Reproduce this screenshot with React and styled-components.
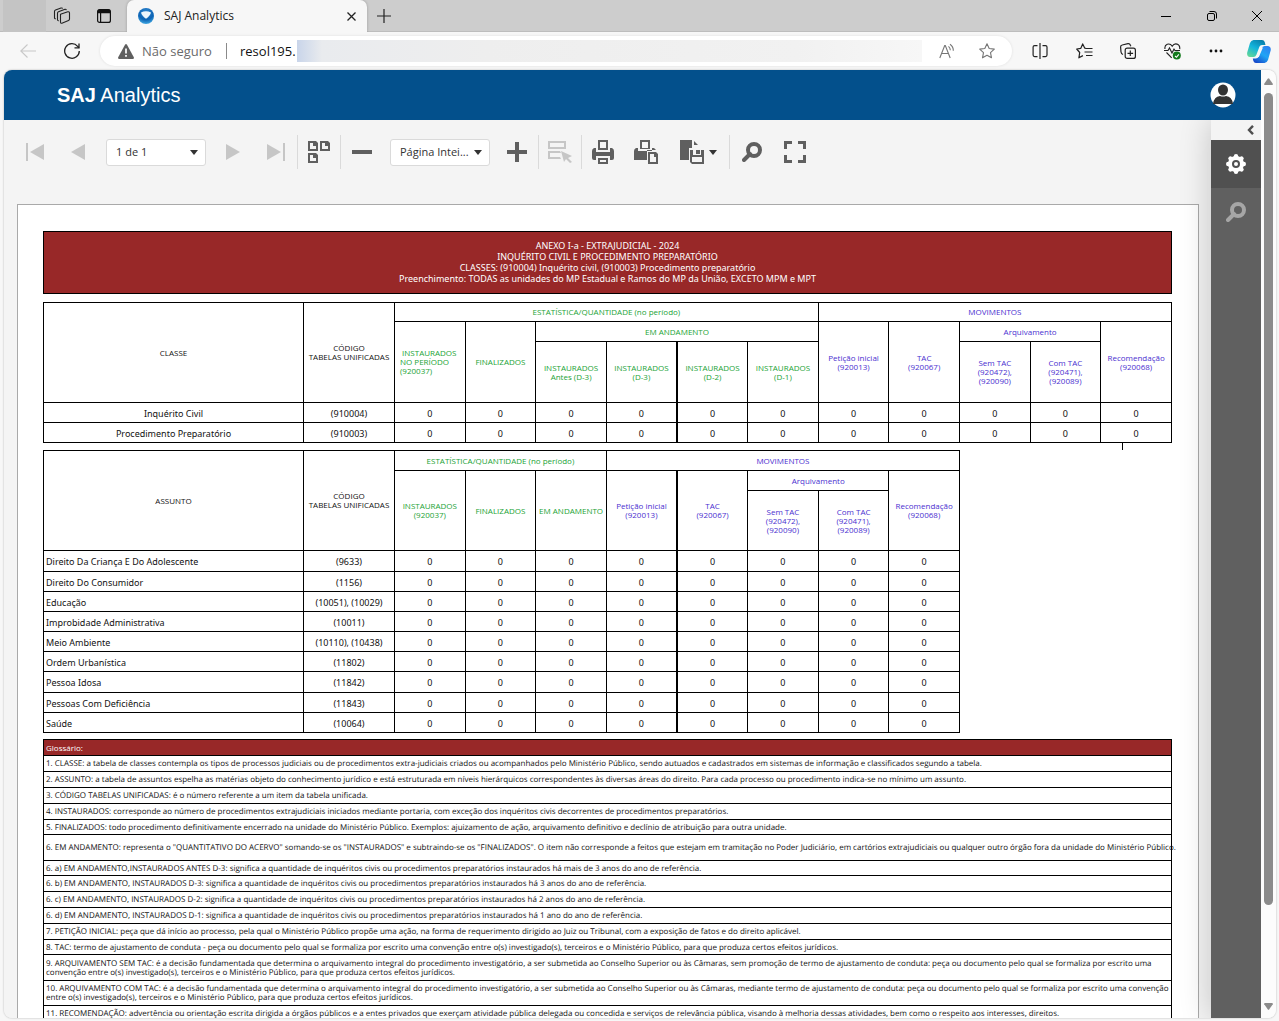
import React, { useState } from "react";
import styled, { createGlobalStyle } from "styled-components";

const estatistica = "ESTATÍSTICA/QUANTIDADE (no período)";

const classes = [
  { nome: "Inquérito Civil", codigo: "(910004)" },
  { nome: "Procedimento Preparatório", codigo: "(910003)" },
];

const assuntos = [
  { nome: "Direito Da Criança E Do Adolescente", codigo: "(9633)" },
  { nome: "Direito Do Consumidor", codigo: "(1156)" },
  { nome: "Educação", codigo: "(10051), (10029)" },
  { nome: "Improbidade Administrativa", codigo: "(10011)" },
  { nome: "Meio Ambiente", codigo: "(10110), (10438)" },
  { nome: "Ordem Urbanística", codigo: "(11802)" },
  { nome: "Pessoa Idosa", codigo: "(11842)" },
  { nome: "Pessoas Com Deficiência", codigo: "(11843)" },
  { nome: "Saúde", codigo: "(10064)" },
];

const glossario = [
  { h: 16, texto: "1. CLASSE: a tabela de classes contempla os tipos de processos judiciais ou de procedimentos extra-judiciais criados ou acompanhados pelo Ministério Público, sendo autuados e cadastrados em sistemas de informação e classificados segundo a tabela." },
  { h: 16, texto: "2. ASSUNTO: a tabela de assuntos espelha as matérias objeto do conhecimento jurídico e está estruturada em níveis hierárquicos correspondentes às diversas áreas do direito. Para cada processo ou procedimento indica-se no mínimo um assunto." },
  { h: 16, texto: "3. CÓDIGO TABELAS UNIFICADAS: é o número referente a um item da tabela unificada." },
  { h: 16, texto: "4. INSTAURADOS: corresponde ao número de procedimentos extrajudiciais iniciados mediante portaria, com exceção dos inquéritos civis decorrentes de procedimentos preparatórios." },
  { h: 15, texto: "5. FINALIZADOS: todo procedimento definitivamente encerrado na unidade do Ministério Público. Exemplos: ajuizamento de ação, arquivamento definitivo e declínio de atribuição para outra unidade." },
  { h: 26, texto: '6. EM ANDAMENTO: representa o "QUANTITATIVO DO ACERVO" somando-se os "INSTAURADOS" e subtraindo-se os "FINALIZADOS". O item não corresponde a feitos que estejam em tramitação no Poder Judiciário, em cartórios extrajudiciais ou qualquer outro órgão fora da unidade do Ministério Público.' },
  { h: 15, texto: "6. a) EM ANDAMENTO,INSTAURADOS ANTES D-3: significa a quantidade de inquéritos civis ou procedimentos preparatórios instaurados há mais de 3 anos do ano de referência." },
  { h: 16, texto: "6. b) EM ANDAMENTO, INSTAURADOS D-3: significa a quantidade de inquéritos civis ou procedimentos preparatórios instaurados há 3 anos do ano de referência." },
  { h: 16, texto: "6. c) EM ANDAMENTO, INSTAURADOS D-2: significa a quantidade de inquéritos civis ou procedimentos preparatórios instaurados há 2 anos do ano de referência." },
  { h: 16, texto: "6. d) EM ANDAMENTO, INSTAURADOS D-1: significa a quantidade de inquéritos civis ou procedimentos preparatórios instaurados há 1 ano do ano de referência." },
  { h: 16, texto: "7. PETIÇÃO INICIAL: peça que dá início ao processo, pela qual o Ministério Público propõe uma ação, na forma de requerimento dirigido ao Juiz ou Tribunal, com a exposição de fatos e do direito aplicável." },
  { h: 15, texto: "8. TAC: termo de ajustamento de conduta - peça ou documento pelo qual se formaliza por escrito uma convenção entre o(s) investigado(s), terceiros e o Ministério Público, para que produza certos efeitos jurídicos." },
  { h: 26, texto: "9. ARQUIVAMENTO SEM TAC: é a decisão fundamentada que determina o arquivamento integral do procedimento investigatório, a ser submetida ao Conselho Superior ou às Câmaras, sem promoção de termo de ajustamento de conduta: peça ou documento pelo qual se formaliza por escrito uma\nconvenção entre o(s) investigado(s), terceiros e o Ministério Público, para que produza certos efeitos jurídicos." },
  { h: 25, texto: "10. ARQUIVAMENTO COM TAC: é a decisão fundamentada que determina o arquivamento integral do procedimento investigatório, a ser submetida ao Conselho Superior ou às Câmaras, mediante termo de ajustamento de conduta: peça ou documento pelo qual se formaliza por escrito uma convenção\nentre o(s) investigado(s), terceiros e o Ministério Público, para que produza certos efeitos jurídicos." },
  { h: 16, texto: "11. RECOMENDAÇÃO: advertência ou orientação escrita dirigida a órgãos públicos e a entes privados que exerçam atividade pública delegada ou concedida e serviços de relevância pública, visando à melhoria dessas atividades, bem como o respeito aos interesses, direitos." },
];

function Caret() {
  return (
    <svg width="8" height="5" viewBox="0 0 8 5">
      <path d="M0 0h8L4 5z" fill="#333" />
    </svg>
  );
}

function SearchIcon({ color }) {
  return (
    <svg width="20" height="20" viewBox="0 0 20 20" fill="none" stroke={color}>
      <circle cx="12" cy="8" r="6" strokeWidth="4" />
      <path d="M8 12l-6 6" strokeWidth="4" strokeLinecap="round" />
    </svg>
  );
}

function TabStrip() {
  return (
    <Tabs>
      <ProfileSlot />
      <StripButton aria-label="Espaços de trabalho" $w={32}>
        <svg width="18" height="18" viewBox="0 0 18 18" fill="none" stroke="#222" strokeWidth="1.1" strokeLinejoin="round">
          <path d="M7.500 7.200l7.300-2.400q1.700-.3 1.700 1.300v6q0 1-1 1.400l-6.600 2.700q-1.400.3-1.400-1.200z" />
          <path d="M5.700 13.600q-1.200.2-1.200-1V6.200q0-1 1-1.400l6.500-2.500q1-.2 1.400.8" />
          <path d="M2.800 11.700q-1.300.2-1.300-1V4.500q0-1 1-1.400L8 1q1.300-.3 1.500.7" />
        </svg>
      </StripButton>
      <StripButton aria-label="Menu de guias" $w={52}>
        <svg width="14" height="14" viewBox="0 0 14 14" fill="none" stroke="#111" strokeWidth="1.2">
          <rect x=".6" y=".6" width="12.800" height="12.800" rx="2" />
          <path d="M1 2.500h12" strokeWidth="3.500" />
          <path d="M3.600 4v9" />
        </svg>
      </StripButton>
      <Tab>
        <svg width="16" height="16" viewBox="0 0 16 16">
          <defs>
            <radialGradient id="fav" cx=".5" cy=".25" r=".8">
              <stop offset="0" stopColor="#2f86cf" />
              <stop offset=".6" stopColor="#0d63b4" />
              <stop offset="1" stopColor="#49b4ea" />
            </radialGradient>
          </defs>
          <circle cx="8" cy="8" r="8" fill="url(#fav)" />
          <path d="M3 4.500q5-2.500 10 0-.5 3-5 6.300Q3.500 7.500 3 4.500z" fill="#eef6fc" />
        </svg>
        <TabTitle>SAJ Analytics</TabTitle>
        <TabClose aria-label="Fechar guia">
          <svg width="9" height="9" viewBox="0 0 9 9" stroke="#222" strokeWidth="1.300">
            <path d="M.5.5l8 8M8.500.5l-8 8" />
          </svg>
        </TabClose>
      </Tab>
      <StripButton aria-label="Nova guia" $w={34}>
        <svg width="14" height="14" viewBox="0 0 14 14" stroke="#222" strokeWidth="1.200">
          <path d="M7 0v14M0 7h14" />
        </svg>
      </StripButton>
      <Spacer />
      <StripButton aria-label="Minimizar" $w={46}>
        <svg width="10" height="10" viewBox="0 0 10 10" stroke="#000">
          <path d="M0 5.500h10" />
        </svg>
      </StripButton>
      <StripButton aria-label="Restaurar" $w={46}>
        <svg width="10" height="10" viewBox="0 0 10 10" fill="none" stroke="#000">
          <rect x=".5" y="2.500" width="7" height="7" rx="1.500" />
          <path d="M2.500.5h4.500q2.500 0 2.500 2.500V7.500" />
        </svg>
      </StripButton>
      <StripButton aria-label="Fechar" $w={44}>
        <svg width="10" height="10" viewBox="0 0 10 10" stroke="#000">
          <path d="M0 0l10 10M10 0L0 10" />
        </svg>
      </StripButton>
    </Tabs>
  );
}

function AddressRow() {
  const [url, setUrl] = useState("resol195.");
  return (
    <NavBar>
      <NavButton aria-label="Voltar">
        <svg width="16" height="14" viewBox="0 0 16 14" fill="none" stroke="#c8c8c8" strokeWidth="1.100">
          <path d="M16 7H.8M7.500.5L.8 7l6.700 6.500" />
        </svg>
      </NavButton>
      <NavButton aria-label="Atualizar">
        <svg width="16" height="16" viewBox="0 0 16 16" fill="none" stroke="#222" strokeWidth="1.300">
          <path d="M15.300 8A7.300 7.300 0 1 1 13.600 3.300L15 4.800" />
          <path d="M15 .5v4.400h-4.500" />
        </svg>
      </NavButton>
      <Address>
        <svg width="16" height="15" viewBox="0 0 16 15">
          <path d="M7 .8q1-1.500 2 0l6.800 12.400q.5 1.500-1 1.800H1.200q-1.500-.3-1-1.800z" fill="#5f5f5f" />
          <path d="M8 4.500v5M8 11v1.800" stroke="#fff" strokeWidth="1.700" />
        </svg>
        <Secure>Não seguro</Secure>
        <AddressDivider />
        <UrlInput aria-label="Endereço" value={url} onChange={(e) => setUrl(e.target.value)} />
        <Hidden />
        <AddressButton aria-label="Ler em voz alta">
          <svg width="17" height="16" viewBox="0 0 17 16" fill="none" stroke="#767676" strokeWidth="1.100">
            <path d="M.8 15L5.700 2.500h.6L11.200 15M2.500 10.500h7" />
            <path d="M9.500 3.300q1.800 1.500 1.800 4M11 1.200q3.500 2.400 3.300 6.600" />
          </svg>
        </AddressButton>
        <AddressButton aria-label="Favoritar">
          <svg width="16" height="16" viewBox="0 0 16 16" fill="none" stroke="#767676" strokeWidth="1.100" strokeLinejoin="round">
            <path d="M8 .8l2.200 4.700 5.100.6-3.800 3.500 1 5.200L8 12.300l-4.500 2.500 1-5.200L.7 6.100l5.100-.6z" />
          </svg>
        </AddressButton>
      </Address>
      <NavButton aria-label="Dividir tela">
        <svg width="16" height="16" viewBox="0 0 16 16" fill="none" stroke="#222" strokeWidth="1.200">
          <path d="M5.500 2.600H2.600q-1.500 0-1.500 1.500v8q0 1.500 1.500 1.500h2.900M10.500 2.600h3q1.500 0 1.500 1.500v8q0 1.500-1.500 1.500h-3M8 0v16" />
        </svg>
      </NavButton>
      <NavButton aria-label="Favoritos">
        <svg width="17" height="16" viewBox="0 0 17 16" fill="none" stroke="#222" strokeWidth="1.200" strokeLinejoin="round">
          <path d="M10 5.300L8.800 5.200 6.700.9 4.700 5.400l-4 .6 3 3.500-.8 5.300 4-2.200M10 5.500h6.500M8.500 9h8M10 12.500h6.500" />
        </svg>
      </NavButton>
      <NavButton aria-label="Coleções">
        <svg width="16" height="16" viewBox="0 0 16 16" fill="none" stroke="#222" strokeWidth="1.200">
          <rect x="5.200" y="5.200" width="10.200" height="10.200" rx="2" />
          <path d="M10.300 7.500v5.600M7.500 10.300h5.600" />
          <path d="M3 11.500Q1.300 11 1 9L.6 4q0-1.700 1.600-2L8 .7q1.800-.2 2.400 1.500l.4 1" />
        </svg>
      </NavButton>
      <NavButton aria-label="Desempenho">
        <svg width="17" height="17" viewBox="0 0 17 17" fill="none" stroke="#222" strokeWidth="1.100">
          <path d="M1 6Q.3 2.500 3.200 1.200 6.500.3 8.200 3.200 10 .3 13 1.100q3.300 1.300 2.700 5M2.500 9.500l5.200 5.400" />
          <path d="M0 7.500h4l1.500-2.500 2.500 5 2-4 1 1.500h5" />
          <circle cx="12.800" cy="12.600" r="4" fill="#137a1c" stroke="none" />
          <path d="M11 13l1.500 1.300 2.300-3" stroke="#fff" />
        </svg>
      </NavButton>
      <NavButton aria-label="Mais opções">
        <svg width="14" height="4" viewBox="0 0 14 4" fill="#111">
          <circle cx="2" cy="2" r="1.400" />
          <circle cx="7" cy="2" r="1.400" />
          <circle cx="12" cy="2" r="1.400" />
        </svg>
      </NavButton>
      <CopilotButton aria-label="Copilot">
        <svg width="24" height="23" viewBox="0 0 24 23">
          <defs>
            <linearGradient id="cpa" x1=".8" y1="0" x2=".2" y2="1">
              <stop offset="0" stopColor="#087ca8" />
              <stop offset=".5" stopColor="#12b4dc" />
              <stop offset="1" stopColor="#5fd69a" />
            </linearGradient>
            <linearGradient id="cpb" x1=".9" y1="0" x2=".2" y2="1">
              <stop offset="0" stopColor="#2f7df0" />
              <stop offset=".5" stopColor="#1fa5f5" />
              <stop offset="1" stopColor="#1747c9" />
            </linearGradient>
          </defs>
          <path d="M6.500 0H15q2 0 2.700 2l.8 3H15q-2 0-2.600 1.800l-3 8Q8.500 17 6.500 17H3Q-.5 16.500.2 12.500L3 3Q4 .3 6.500 0z" fill="url(#cpa)" />
          <path d="M17.500 23H9q-2 0-2.600-2L5.800 18.500H9q2.300-.3 3-2.500l2.500-7.500q.8-2.300 3-2.500h3.500q3 .5 2.800 4L21 20q-1 2.700-3.500 3z" fill="url(#cpb)" />
          <path d="M14 7.500h2l-4.200 9.500h-2z" fill="#f7f7f7" />
        </svg>
      </CopilotButton>
    </NavBar>
  );
}

function ViewerToolbar() {
  return (
    <Toolbar>
      <ToolButton aria-label="Primeira página">
        <svg width="18" height="18" viewBox="0 0 18 18" fill="#c6c6c6">
          <path d="M0 0h2v18H0zM18 1v16L4 9z" />
        </svg>
      </ToolButton>
      <ToolButton aria-label="Página anterior">
        <svg width="14" height="16" viewBox="0 0 14 16" fill="#c6c6c6">
          <path d="M14 0v16L0 8z" />
        </svg>
      </ToolButton>
      <Combo>
        <select aria-label="Página" defaultValue="1">
          <option value="1">1 de 1</option>
        </select>
        <Caret />
      </Combo>
      <ToolButton aria-label="Próxima página">
        <svg width="14" height="16" viewBox="0 0 14 16" fill="#c6c6c6">
          <path d="M0 0v16l14-8z" />
        </svg>
      </ToolButton>
      <ToolButton aria-label="Última página">
        <svg width="18" height="18" viewBox="0 0 18 18" fill="#c6c6c6">
          <path d="M16 0h2v18h-2zM0 1v16l14-8z" />
        </svg>
      </ToolButton>
      <Divider />
      <ToolButton aria-label="Várias páginas" $w={42}>
        <svg width="22" height="22" viewBox="0 0 22 22" fill="#5f5f5f" fillRule="evenodd">
          <path d="M0 0h8l2 2v8H0zM2 2v6h6V5H5V2z" />
          <path d="M12 0h8l2 2v8H12zM14 2v6h6V5h-3V2z" />
          <path d="M0 12h8l2 2v8H0zM2 14v6h6v-3H5v-3z" />
        </svg>
      </ToolButton>
      <Divider />
      <ToolButton aria-label="Diminuir zoom" $w={42}>
        <svg width="20" height="4" viewBox="0 0 20 4" fill="#5f5f5f">
          <path d="M0 0h20v4H0z" />
        </svg>
      </ToolButton>
      <Combo>
        <select aria-label="Zoom" defaultValue="inteira">
          <option value="inteira">Página Intei...</option>
        </select>
        <Caret />
      </Combo>
      <ToolButton aria-label="Aumentar zoom">
        <svg width="20" height="20" viewBox="0 0 20 20" fill="#5f5f5f">
          <path d="M8 0h4v8h8v4h-8v8H8v-8H0V8h8z" />
        </svg>
      </ToolButton>
      <Divider />
      <ToolButton aria-label="Destacar campos" $w={42}>
        <svg width="24" height="22" viewBox="0 0 24 22" fill="#c6c6c6" fillRule="evenodd">
          <path d="M0 0h18v8H0zM2 2v4h14V2z" />
          <path d="M0 10h12l1 2H2v4h10l1 2H0z" />
          <path d="M13 10l11 5-4 2 4 4-2 1-4-4-2 3z" />
        </svg>
      </ToolButton>
      <Divider />
      <ToolButton aria-label="Imprimir" $w={42}>
        <svg width="22" height="24" viewBox="0 0 22 24" fill="#5f5f5f" fillRule="evenodd">
          <path d="M6 0h10v10H6zM8 2v6h6V2z" />
          <path d="M2 8h2v4h14V8h2q2 1 2 3v7q0 2-2 2h-2v-4H4v4H2q-2 0-2-2v-7q0-2 2-3z" />
          <path d="M6 18h10v6H6zM8 20v2h6v-2z" />
        </svg>
      </ToolButton>
      <ToolButton aria-label="Imprimir página">
        <svg width="24" height="24" viewBox="0 0 24 24" fill="#5f5f5f" fillRule="evenodd">
          <path d="M6 0h10v9H6zM8 2v6h6V2z" />
          <path d="M2 8h2v3h14V8h2l2 2h-9v10H0v-9q0-2 2-3z" />
          <path d="M14 12h8l2 2v10H14zM16 14v8h6v-5h-2v-3z" />
        </svg>
      </ToolButton>
      <ToolButton aria-label="Exportar" $w={62}>
        <svg width="24" height="24" viewBox="0 0 24 24" fill="#5f5f5f" fillRule="evenodd">
          <path d="M0 0h12v8H9v12H0zM14 1l4 4h-4z" />
          <path d="M10 10h3v5h8v-5h3v14H12l-2-2zM12 17v5h10v-5zM16 10h4v4h-4z" />
        </svg>
        <Caret />
      </ToolButton>
      <Divider />
      <ToolButton aria-label="Pesquisar">
        <SearchIcon color="#5f5f5f" />
      </ToolButton>
      <ToolButton aria-label="Tela cheia">
        <svg width="22" height="22" viewBox="0 0 22 22" fill="none" stroke="#5f5f5f" strokeWidth="3">
          <path d="M1.500 8V1.500H8M14 1.500h6.500V8M20.500 14v6.500H14M8 20.500H1.500V14" />
        </svg>
      </ToolButton>
    </Toolbar>
  );
}

function Zeros({ count }) {
  return Array.from({ length: count }, (_, i) => (
    <Cell key={i} $thick={i === 4}>
      0
    </Cell>
  ));
}

function Cols({ count }) {
  return (
    <colgroup>
      <NameCol />
      <CodeCol />
      {Array.from({ length: count }, (_, i) => (
        <col key={i} />
      ))}
    </colgroup>
  );
}

function Classes() {
  return (
    <Grid>
      <Cols count={11} />
      <thead>
        <Row $h={19}>
          <Head rowSpan={3}>CLASSE</Head>
          <Head rowSpan={3}>{"CÓDIGO\nTABELAS UNIFICADAS"}</Head>
          <Head $c="green" colSpan={6}>{estatistica}</Head>
          <Head $c="blue" colSpan={5}>MOVIMENTOS</Head>
        </Row>
        <Row $h={20}>
          <Head $c="green" $left rowSpan={2}>{" INSTAURADOS\nNO PERÍODO\n(920037)"}</Head>
          <Head $c="green" rowSpan={2}>FINALIZADOS</Head>
          <Head $c="green" colSpan={4}>EM ANDAMENTO</Head>
          <Head $c="blue" rowSpan={2}>{"Petição inicial\n(920013)"}</Head>
          <Head $c="blue" rowSpan={2}>{"TAC\n(920067)"}</Head>
          <Head $c="blue" colSpan={2}>Arquivamento</Head>
          <Head $c="blue" rowSpan={2}>{"Recomendação\n(920068)"}</Head>
        </Row>
        <Row $h={61}>
          <Head $c="green">{"INSTAURADOS\nAntes (D-3)"}</Head>
          <Head $c="green">{"INSTAURADOS\n(D-3)"}</Head>
          <Head $c="green" $thick>{"INSTAURADOS\n(D-2)"}</Head>
          <Head $c="green">{"INSTAURADOS\n(D-1)"}</Head>
          <Head $c="blue">{"Sem TAC\n(920472),\n(920090)"}</Head>
          <Head $c="blue">{"Com TAC\n(920471),\n(920089)"}</Head>
        </Row>
      </thead>
      <tbody>
        {classes.map((c) => (
          <Row key={c.codigo} $h={20}>
            <Cell>{c.nome}</Cell>
            <Cell>{c.codigo}</Cell>
            <Zeros count={11} />
          </Row>
        ))}
      </tbody>
    </Grid>
  );
}

function Assuntos() {
  return (
    <Grid $narrow>
      <Cols count={8} />
      <thead>
        <Row $h={20}>
          <Head rowSpan={3}>ASSUNTO</Head>
          <Head rowSpan={3}>{"CÓDIGO\nTABELAS UNIFICADAS"}</Head>
          <Head $c="green" colSpan={3}>{estatistica}</Head>
          <Head $c="blue" colSpan={5}>MOVIMENTOS</Head>
        </Row>
        <Row $h={20}>
          <Head $c="green" rowSpan={2}>{"INSTAURADOS\n(920037)"}</Head>
          <Head $c="green" rowSpan={2}>FINALIZADOS</Head>
          <Head $c="green" rowSpan={2}>EM ANDAMENTO</Head>
          <Head $c="blue" rowSpan={2}>{"Petição inicial\n(920013)"}</Head>
          <Head $c="blue" $thick rowSpan={2}>{"TAC\n(920067)"}</Head>
          <Head $c="blue" colSpan={2}>Arquivamento</Head>
          <Head $c="blue" rowSpan={2}>{"Recomendação\n(920068)"}</Head>
        </Row>
        <Row $h={60}>
          <Head $c="blue">{"Sem TAC\n(920472),\n(920090)"}</Head>
          <Head $c="blue">{"Com TAC\n(920471),\n(920089)"}</Head>
        </Row>
      </thead>
      <tbody>
        {assuntos.map((a, i) => (
          <Row key={a.nome} $h={i % 6 === 0 ? 21 : 20}>
            <Cell $left>{a.nome}</Cell>
            <Cell>{a.codigo}</Cell>
            <Zeros count={8} />
          </Row>
        ))}
      </tbody>
    </Grid>
  );
}

function Glossario() {
  return (
    <Grid>
      <thead>
        <Row $h={16}>
          <GlossaryHead>Glossário:</GlossaryHead>
        </Row>
      </thead>
      <tbody>
        {glossario.map((g) => (
          <Row key={g.texto} $h={g.h}>
            <GlossaryCell>{g.texto}</GlossaryCell>
          </Row>
        ))}
      </tbody>
    </Grid>
  );
}

function SidePanel() {
  return (
    <Panel>
      <Collapse aria-label="Recolher painel">
        <svg width="7" height="10" viewBox="0 0 7 10" fill="none" stroke="#505050" strokeWidth="2.400">
          <path d="M6 .8L2 5l4 4.200" />
        </svg>
      </Collapse>
      <PanelTab aria-label="Parâmetros" $active>
        <svg width="20" height="20" viewBox="0 0 20 20">
          <g fill="#fff">
            <circle cx="10" cy="10" r="8" />
            {[0, 45, 90, 135, 180, 225, 270, 315].map((a) => (
              <circle key={a} cx="10" cy="2.200" r="2.200" transform={`rotate(${a} 10 10)`} />
            ))}
          </g>
          <circle cx="10" cy="10" r="3" fill="none" stroke="#505050" strokeWidth="2" />
        </svg>
      </PanelTab>
      <PanelTab aria-label="Pesquisar no documento">
        <SearchIcon color="#a6a6a6" />
      </PanelTab>
    </Panel>
  );
}

function App() {
  return (
    <Window>
      <GlobalStyle />
      <TabStrip />
      <AddressRow />
      <Frame>
        <Site>
          <Header>
            <Brand>
              <b>SAJ</b> Analytics
            </Brand>
            <UserButton aria-label="Usuário">
              <svg width="26" height="26" viewBox="0 0 26 26">
                <circle cx="13" cy="13" r="12.500" fill="#fff" />
                <ellipse cx="13" cy="8" rx="5" ry="5.500" fill="#333" />
                <path d="M3 22q1-7.500 7-8 3 1.200 6 0 6 .5 7 8z" fill="#333" />
              </svg>
            </UserButton>
          </Header>
          <Viewer>
            <Document>
              <ViewerToolbar />
              <Sheet>
                <Banner>
                  {"ANEXO I-a - EXTRAJUDICIAL - 2024\nINQUÉRITO CIVIL E PROCEDIMENTO PREPARATÓRIO\nCLASSES: (910004) Inquérito civil, (910003) Procedimento preparatório\nPreenchimento: TODAS as unidades do MP Estadual e Ramos do MP da União, EXCETO MPM e MPT"}
                </Banner>
                <Classes />
                <TickRow />
                <Assuntos />
                <Glossario />
              </Sheet>
            </Document>
            <SidePanel />
          </Viewer>
        </Site>
        <Scrollbar>
          <svg width="9" height="7" viewBox="0 0 9 7" fill="#8b8b8b">
            <path d="M3.700.7q.8-1 1.600 0L8.800 5.800Q9 7 8 7H1Q0 7 .2 5.800z" />
          </svg>
          <Track>
            <Thumb />
          </Track>
          <svg width="9" height="7" viewBox="0 0 9 7" fill="#8b8b8b">
            <path d="M3.700 6.300q.8 1 1.600 0L8.800 1.200Q9 0 8 0H1Q0 0 .2 1.200z" />
          </svg>
        </Scrollbar>
      </Frame>
    </Window>
  );
}

export default App;

const GlobalStyle = createGlobalStyle`
  * {
    box-sizing: border-box;
  }
  body {
    margin: 0;
    font-family: "Open Sans", "Noto Sans", sans-serif;
  }
  button {
    border: none;
    padding: 0;
    background: none;
    font: inherit;
  }
  svg {
    display: block;
    flex: none;
  }
`;

const colors = {
  green: "#22a336",
  blue: "#4a2fd0",
};

const Window = styled.div`
  display: flex;
  flex-direction: column;
  height: 100vh;
  overflow: hidden;
  background: #f7f7f7;
`;
const Tabs = styled.div`
  display: flex;
  flex: none;
  height: 32px;
  background: #cdcdcd;
  box-shadow: inset 0 -1px 0 #bdbdbd;
`;
const ProfileSlot = styled.div`
  width: 43px;
  margin-left: 3px;
  background: #c4c4c4;
`;
const StripButton = styled.button`
  display: flex;
  align-items: center;
  justify-content: center;
  width: ${(p) => p.$w}px;
`;
const Tab = styled.div`
  display: flex;
  align-items: center;
  width: 240px;
  padding: 0 10px 0 11px;
  margin-left: -3px;
  gap: 10px;
  border-radius: 7px 7px 0 0;
  background: #f7f7f7;
  box-shadow: 0 0 3px rgba(0, 0, 0, 0.25);
  clip-path: inset(0 -3px 0 -3px);
`;
const TabTitle = styled.span`
  flex: 1;
  padding-bottom: 1px;
  font-size: 12px;
  line-height: 16px;
  color: #222;
`;
const TabClose = styled.button`
  padding: 4px 1px;
`;
const Spacer = styled.div`
  flex: 1;
`;
const NavBar = styled.div`
  display: flex;
  flex: none;
  align-items: center;
  height: 38px;
  padding-left: 6px;
`;
const NavButton = styled.button`
  display: flex;
  align-items: center;
  justify-content: center;
  width: 44px;
  height: 30px;
`;
const CopilotButton = styled(NavButton)`
  width: 41px;
`;
const Address = styled.div`
  display: flex;
  flex: 1;
  align-items: center;
  height: 30px;
  margin: 0 6px;
  padding: 0 5px 0 18px;
  border-radius: 15px;
  background: #fff;
  box-shadow: 0 0 3px rgba(0, 0, 0, 0.1);
`;
const Secure = styled.span`
  margin-left: 8px;
  width: 84px;
  font-size: 13px;
  color: #6b6b6b;
`;
const AddressDivider = styled.div`
  width: 1px;
  height: 16px;
  margin-right: 13px;
  background: #8a8a8a;
`;
const UrlInput = styled.input`
  width: 57px;
  padding: 0;
  border: none;
  outline: none;
  background: none;
  font: 13px "Open Sans", sans-serif;
  color: #111;
`;
const Hidden = styled.div`
  flex: 1;
  height: 22px;
  margin-right: 5px;
  background: linear-gradient(90deg, #c9d5ea, #e9ebee 4%, #eeeeee 30%, #f1f1f1 80%, #f7f7f7);
`;
const AddressButton = styled.button`
  display: flex;
  align-items: center;
  justify-content: center;
  width: 40px;
`;
const Frame = styled.div`
  display: flex;
  flex: 1;
  min-height: 0;
  margin: 0 3px 3px 4px;
  border-radius: 8px;
  overflow: hidden;
  box-shadow: 0 0 2px rgba(0, 0, 0, 0.3);
`;
const Site = styled.div`
  display: flex;
  flex: 1;
  flex-direction: column;
  min-width: 0;
`;
const Header = styled.header`
  display: flex;
  flex: none;
  align-items: center;
  justify-content: space-between;
  height: 50px;
  padding: 0 25px 0 53px;
  background: #03508c;
`;
const Brand = styled.div`
  font: 20px "Liberation Sans", sans-serif;
  color: #fff;
`;
const UserButton = styled.button`
  display: block;
`;
const Viewer = styled.main`
  display: flex;
  flex: 1;
  min-height: 0;
  background: #f4f4f4;
`;
const Document = styled.div`
  flex: 1;
  min-width: 0;
  overflow: hidden;
`;
const Toolbar = styled.div`
  display: flex;
  align-items: center;
  height: 64px;
  margin-bottom: 20px;
  padding-left: 9px;
`;
const ToolButton = styled.button`
  display: flex;
  flex: none;
  align-items: center;
  justify-content: center;
  gap: 5px;
  width: ${(p) => p.$w || 43}px;
  height: 34px;
`;
const Divider = styled.div`
  flex: none;
  width: 1px;
  height: 34px;
  background: #dadada;
`;
const Combo = styled.label`
  display: flex;
  flex: none;
  align-items: center;
  width: 100px;
  height: 27px;
  margin: 0 5px 0 7px;
  padding-right: 7px;
  border: 1px solid #dadada;
  border-radius: 3px;
  background: #fff;

  & select {
    flex: 1;
    min-width: 0;
    height: 25px;
    padding: 0 0 1px 9px;
    border: none;
    outline: none;
    appearance: none;
    background: none;
    font: 11px "Open Sans", sans-serif;
    color: #333;
  }
`;
const Sheet = styled.article`
  height: 1200px;
  margin: 0 12px 0 13px;
  padding: 26px 26px 0 25px;
  border: 1px solid #a9a9a9;
  background: #fff;
`;
const Banner = styled.h1`
  display: flex;
  align-items: center;
  justify-content: center;
  height: 63px;
  margin: 0 0 8px;
  padding-bottom: 1px;
  border: 1px solid #000;
  background: #982828;
  font-family: "Noto Sans", sans-serif;
  font-size: 9px;
  font-weight: 400;
  line-height: 11px;
  text-align: center;
  white-space: pre;
  color: #fff;
`;
const Grid = styled.table`
  width: ${(p) => (p.$narrow ? "calc(100% - 212px)" : "100%")};
  margin-bottom: ${(p) => (p.$narrow ? "6px" : "0")};
  border-collapse: collapse;
  table-layout: fixed;
`;
const NameCol = styled.col`
  width: 260px;
`;
const CodeCol = styled.col`
  width: 91px;
`;
const Row = styled.tr`
  height: ${(p) => p.$h}px;
`;
const Cell = styled.td`
  padding: 2px 2px 0;
  border: 1px solid #000;
  border-left-width: ${(p) => (p.$thick ? 2 : 1)}px;
  font-family: "Noto Sans", sans-serif;
  font-size: 9px;
  line-height: 12px;
  text-align: ${(p) => (p.$left ? "left" : "center")};
  color: #111;
`;
const Head = styled.th`
  padding: 0 ${(p) => (p.$left ? 5 : 0)}px 1px;
  border: 1px solid #000;
  border-left-width: ${(p) => (p.$thick ? 2 : 1)}px;
  font-size: 8px;
  font-weight: 400;
  line-height: 9px;
  text-align: ${(p) => (p.$left ? "left" : "center")};
  white-space: pre;
  color: ${(p) => colors[p.$c] || "#111"};
`;
const GlossaryCell = styled.td`
  padding: 0 2px;
  border: 1px solid #000;
  font-size: 8px;
  line-height: 9px;
  text-rendering: geometricPrecision;
  white-space: pre;
  color: #111;
`;
const GlossaryHead = styled.th`
  padding: 0 2px;
  border: 1px solid #000;
  background: #982828;
  font-size: 8px;
  font-weight: 400;
  line-height: 9px;
  text-align: left;
  color: #fff;
`;
const TickRow = styled.div`
  width: 1px;
  height: 7px;
  margin: 0 49px 0 auto;
  background: #000;
`;
const Panel = styled.aside`
  display: flex;
  flex: none;
  flex-direction: column;
  width: 50px;
  background: #606060;
  box-shadow: 0 0 32px rgba(0, 0, 0, 0.2);
  clip-path: inset(0 0 0 -40px);
`;
const Collapse = styled.button`
  display: flex;
  align-items: center;
  justify-content: flex-end;
  height: 20px;
  padding-right: 7px;
  background: #f4f4f4;
`;
const PanelTab = styled.button`
  display: flex;
  align-items: center;
  justify-content: center;
  height: 48px;
  background: ${(p) => (p.$active ? "#505050" : "none")};
`;
const Scrollbar = styled.div`
  display: flex;
  flex: none;
  flex-direction: column;
  align-items: center;
  gap: 8px;
  width: 15px;
  padding: 8px 0;
  background: #fcfcfc;
`;
const Track = styled.div`
  flex: 1;
`;
const Thumb = styled.div`
  width: 9px;
  height: 90%;
  border-radius: 5px;
  background: #8b8b8b;
`;
